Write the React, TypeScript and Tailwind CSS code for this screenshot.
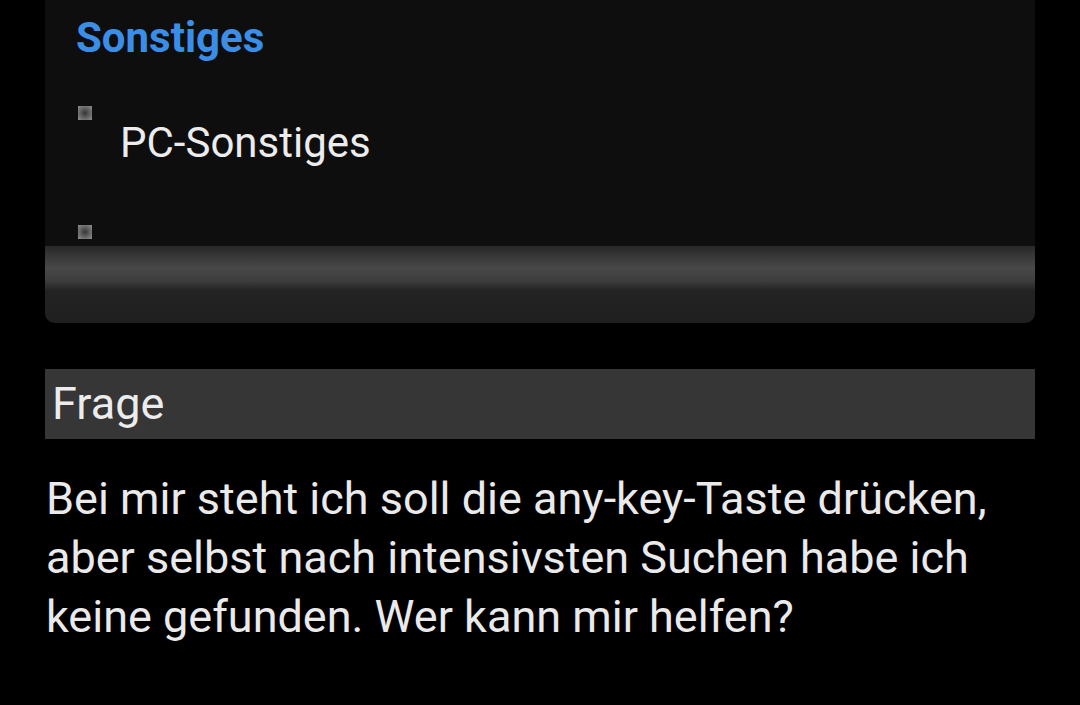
export default function App() {
  return (
    <div
      className="min-h-[705px] w-[1080px] bg-black overflow-hidden"
      style={{ fontFamily: "Roboto, 'Noto Sans', sans-serif" }}
    >
      <div className="mx-[45px] w-[990px]">
        {/* Category panel */}
        <div className="bg-[#0e0e0e] rounded-b-[10px] overflow-hidden">
          <div className="pl-[31px] pt-[13px]">
            <h2 className="text-[42px] leading-[50px] font-bold text-[#3b8ee8]">Sonstiges</h2>
            <ul className="mt-[43px]">
              <li className="flex">
                <span className="ml-[2px] h-[14px] w-[14px] bg-[radial-gradient(circle,#363636,#909090)]" />
                <span className="ml-[28px] mt-[12px] text-[42px] leading-[50px] text-[#ececec]">PC-Sonstiges</span>
              </li>
              <li className="flex mt-[57px] pb-[7px]">
                <span className="ml-[2px] h-[14px] w-[14px] bg-[radial-gradient(circle,#363636,#909090)]" />
              </li>
            </ul>
          </div>
          <div className="h-[77px] bg-[linear-gradient(to_bottom,#282828_0%,#383838_14%,#484848_29%,#3c3c3c_46%,#232323_58%,#1f1f1f_100%)]" />
        </div>

        {/* Frage */}
        <div className="mt-[46px] h-[70px] bg-[#363636] pl-[7px] flex items-center">
          <span className="text-[45px] leading-[50px] text-[#ececec]">Frage</span>
        </div>

        <p className="mt-[30px] pl-[1px] text-[45px] leading-[59px] text-[#eaeaea]">
          Bei mir steht ich soll die any-key-Taste drücken,
          <br />
          aber selbst nach intensivsten Suchen habe ich
          <br />
          keine gefunden. Wer kann mir helfen?
        </p>
      </div>
    </div>
  );
}
